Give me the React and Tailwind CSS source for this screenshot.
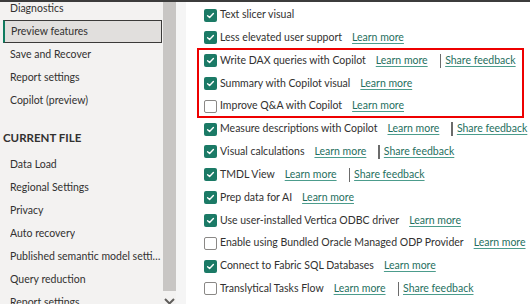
import React from 'react';

const generalItems = ['Diagnostics', 'Preview features', 'Save and Recover', 'Report settings', 'Copilot (preview)'];
const fileItems = ['Data Load', 'Regional Settings', 'Privacy', 'Auto recovery', 'Published semantic model settings', 'Query reduction', 'Report settings'];

const features = [
    { label: 'Text slicer visual', checked: true },
    { label: 'Less elevated user support', checked: true, learn: true },
    { label: 'Write DAX queries with Copilot', checked: true, learn: true, share: true },
    { label: 'Summary with Copilot visual', checked: true, learn: true },
    { label: 'Improve Q&A with Copilot', checked: false, learn: true },
    { label: 'Measure descriptions with Copilot', checked: true, learn: true, share: true },
    { label: 'Visual calculations', checked: true, learn: true, share: true },
    { label: 'TMDL View', checked: true, learn: true, share: true },
    { label: 'Prep data for AI', checked: true, learn: true },
    { label: 'Use user-installed Vertica ODBC driver', checked: true, learn: true },
    { label: 'Enable using Bundled Oracle Managed ODP Provider', checked: false, learn: true },
    { label: 'Connect to Fabric SQL Databases', checked: true, learn: true },
    { label: 'Translytical Tasks Flow', checked: false, learn: true, share: true },
];

function Checkbox({ checked }) {
    if (!checked) {
        return <div className="w-[13px] h-[13px] shrink-0 rounded-[2px] border border-[#8a8886] bg-white" />;
    }
    return (
        <div className="w-[13px] h-[13px] shrink-0 rounded-[2px] bg-[#1b7a66] flex items-center justify-center">
            <svg width="9" height="9" viewBox="0 0 9 9">
                <path d="M1.6 4.7 L3.6 6.6 L7.4 2.6" fill="none" stroke="white" strokeWidth="1.4" strokeLinecap="round" strokeLinejoin="round" />
            </svg>
        </div>
    );
}

function Link({ children }) {
    return <span className="text-[#1f6f60] underline underline-offset-2 decoration-[1px] decoration-[#4c9c8c]">{children}</span>;
}

export default function App() {
    return (
        <div className="relative w-[530px] h-[304px] overflow-hidden flex border-t-2 border-[#3c3c3c] bg-white text-[10.5px] text-[#323130]" style={{ fontFamily: 'Lato, "Noto Sans", sans-serif' }}>
            {/* Left nav */}
            <div className="w-[163px] shrink-0 bg-[#f3f2f1] flex flex-col -mt-[5px]">
                {generalItems.map((item) =>
                    item === 'Preview features' ? (
                        <div key={item} className="h-[23px] shrink-0 ml-[3px] mr-[1px] flex items-center pl-[6px] bg-[#e1dfdd] border border-[#3b3a39] border-l-[2px] border-l-[#0f7b5f]">
                            {item}
                        </div>
                    ) : (
                        <div key={item} className="h-[23px] shrink-0 flex items-center pl-[10px]">{item}</div>
                    )
                )}
                <div className="mt-[10.5px] h-[31px] shrink-0 flex items-center pl-[3px] text-[11.5px] font-bold">CURRENT FILE</div>
                {fileItems.map((item, i) => (
                    <div key={i} className="h-[23px] shrink-0 flex items-center pl-[10px] pr-[2px]">
                        <span className="truncate">{item}</span>
                    </div>
                ))}
            </div>

            {/* Scrollbar */}
            <div className="w-[13px] shrink-0 bg-[#f3f2f1] flex flex-col">
                <div className="h-[289px] shrink-0 bg-[#c8c6c4]" />
                <div className="flex justify-center pt-[7px]">
                    <svg width="11" height="7" viewBox="0 0 11 7">
                        <path d="M1 1 L5.5 5.5 L10 1" fill="none" stroke="#605e5c" strokeWidth="2" />
                    </svg>
                </div>
            </div>
            <div className="w-[10px] shrink-0 bg-[#f5f5f5]" />

            {/* Preview features list */}
            <div className="flex-1 flex flex-col pt-[1.6px] pl-[18px]">
                {features.map((f) => (
                    <div key={f.label} className="h-[22.83px] shrink-0 flex items-center whitespace-nowrap">
                        <Checkbox checked={f.checked} />
                        <span className="ml-[3px]">{f.label}</span>
                        {f.learn && <span className="ml-[10px]"><Link>Learn more</Link></span>}
                        {f.share && (
                            <>
                                <span className="ml-[12px] w-[1.5px] h-[14px] bg-[#6b6b6b]" />
                                <span className="ml-[4px]"><Link>Share feedback</Link></span>
                            </>
                        )}
                    </div>
                ))}
            </div>

            {/* highlight box */}
            <div className="absolute left-[197px] top-[46px] w-[327px] h-[70px] border-2 border-[#ee0000] pointer-events-none" />
        </div>
    );
}
